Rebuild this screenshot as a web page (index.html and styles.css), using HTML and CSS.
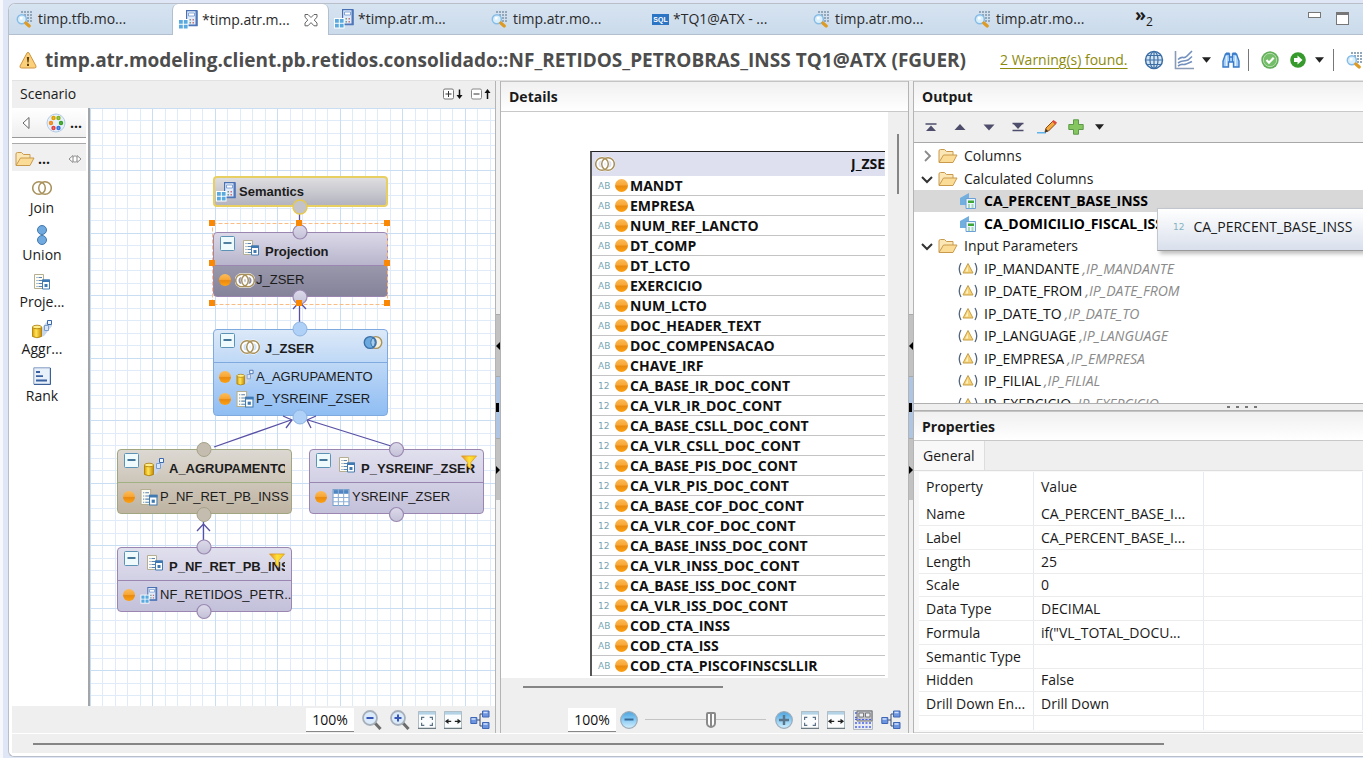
FILE: index.html
```html
<!DOCTYPE html>
<html lang="en">
<head>
<meta charset="utf-8">
<title>NF_RETIDOS_PETROBRAS_INSS</title>
<link rel="stylesheet" href="styles.css">
</head>
<body>
<svg class="sprite" aria-hidden="true">
  <defs>
    <linearGradient id="g-orange" x1="0" y1="0" x2="0" y2="1"><stop offset="0" stop-color="#fbbb58"/><stop offset=".45" stop-color="#f8a838"/><stop offset=".55" stop-color="#e98a10"/><stop offset="1" stop-color="#ffa210"/></linearGradient>
    <linearGradient id="g-gold" x1="0" y1="0" x2="1" y2="0"><stop offset="0" stop-color="#d99a00"/><stop offset=".4" stop-color="#ffe65a"/><stop offset="1" stop-color="#c98a00"/></linearGradient>
    <linearGradient id="g-blue" x1="0" y1="0" x2="0" y2="1"><stop offset="0" stop-color="#4ea3dc"/><stop offset=".4" stop-color="#7cc4f2"/><stop offset="1" stop-color="#d4effd"/></linearGradient>
    <linearGradient id="g-node" x1="0" y1="0" x2="0" y2="1"><stop offset="0" stop-color="#dcdaea"/><stop offset="1" stop-color="#c4c1d8"/></linearGradient>
    <linearGradient id="g-funnel" x1="0" y1="0" x2="1" y2="0"><stop offset="0" stop-color="#e88a2a"/><stop offset=".5" stop-color="#ffe23a"/><stop offset="1" stop-color="#f5c518"/></linearGradient>
  </defs>
  <symbol id="preview" viewBox="0 0 18 18"><path d="M5 1h2v2H5zM8 1h2v2H8zM11 1h2v2h-2zM14 1h2v2h-2zM8 4h2v2H8zM11 4h2v2h-2zM14 4h2v2h-2zM11 7h2v2h-2zM14 7h2v2h-2zM14 10h2v2h-2zM11 10h2v2h-2z" fill="#93a7bb"/><circle cx="5.800" cy="9.200" r="4.500" fill="#d9effc" stroke="#86bce6" stroke-width="1.500"/><path d="M4 7h2.500v2.500H4z" fill="#fff"/><path d="M9.800 13l3.400 3" stroke="#dd9a24" stroke-width="3.200" stroke-linecap="round"/></symbol>
  <symbol id="calcview" viewBox="0 0 20 20"><path d="M8.600.600H19v15H8.600z" fill="#e1ebf9" stroke="#4a70b4" stroke-width="1.200"/><path d="M17.500 1h2v15H10v-1.500h7.500z" fill="#4f76b9"/><path d="M10.500 3h6v3h-6z" fill="#fff" stroke="#6c92cc" stroke-width=".8"/><path d="M11.500 9H13v1.500h-1.500zM11.500 12H13v1.500h-1.500z" fill="#7a9a8a"/><path d="M14.500 9H16v1.500h-1.500zM14.500 12H16v1.500h-1.500z" fill="#c9707a"/><path d="M0 9h10.500v10.500H0z" fill="#fff"/><path d="M1 10h3.800v3.800H1zM5.800 10h3.800v3.800H5.800zM1 14.800h3.800v3.800H1zM5.800 14.800h3.800v3.800H5.800z" fill="#5aaadf"/></symbol>
  <symbol id="cross" viewBox="0 0 14 14"><path d="M1 1.500h3L7 4.500l3-3h3v2.800L10.200 7l2.800 3v2.800h-3L7 9.600l-3 3.200H1V10l2.800-3L1 4.300z" fill="#fff" stroke="#666"/></symbol>
  <symbol id="warn" viewBox="0 0 18 18"><path d="M8 2q1-1.500 2 0l7 13q.5 2-1.500 2h-13q-2 0-1.500-2z" fill="#fbd07a" stroke="#cf9440" stroke-linejoin="round"/><path d="M7.800 6h2.400l-.6 5.500H8.400zM8 12.800h2V15H8z" fill="#614012"/></symbol>
  <symbol id="globe" viewBox="0 0 20 20"><circle cx="10" cy="10" r="8.500" fill="#d4e6f6" stroke="#3d6fa5" stroke-width="1.500"/><ellipse cx="10" cy="10" rx="4" ry="8.500" fill="none" stroke="#3d6fa5" stroke-width="1.200"/><path d="M10 1.500v17M1.500 10h17M3 5.500h14M3 14.500h14" stroke="#3d6fa5" stroke-width="1.200"/></symbol>
  <symbol id="chart" viewBox="0 0 20 20"><path d="M1.500 1v17.500H20" fill="none" stroke="#8b9ab5" stroke-width="1.600"/><path d="M4 9.500q3-2.500 5-2t4-1.500l5-5M4 13q3-2 5-2t5-1l4-3.500M4 16q3-2 5-1.500t9-3" fill="none" stroke="#7390bd" stroke-width="1.600"/></symbol>
  <symbol id="binoc" viewBox="0 0 18 18"><path d="M3.500 3h4v3h3V3h4L17 10v6h-5.500v-5h-5v5H1v-6z" fill="#a5cef6" stroke="#3a7bc9" stroke-width="1.400"/><path d="M4 1.500h3.500v2H4zM10.500 1.500H14v2h-3.500z" fill="#3a7bc9"/><path d="M4.500 5v10M13.500 5v10" stroke="#e4f2fe" stroke-width="1.400"/><path d="M7.500 6v5M10.500 6v5" stroke="#3a7bc9"/></symbol>
  <symbol id="check" viewBox="0 0 18 18"><circle cx="9" cy="9" r="8.700" fill="#62ae58"/><circle cx="9" cy="9" r="6.700" fill="#74bd69" stroke="#b6deae"/><path d="M5.500 9l2.500 2.700 4.700-5" fill="none" stroke="#fff" stroke-width="2.200"/></symbol>
  <symbol id="go" viewBox="0 0 18 18"><circle cx="9" cy="9" r="7.800" fill="#379a2c"/><path d="M5 7h3.500V4.500L13.500 9l-5 4.500V11H5z" fill="#fff"/></symbol>
  <symbol id="caret" viewBox="0 0 10 6"><path d="M0 0h10L5 6z" fill="#222"/></symbol>
  <symbol id="expand" viewBox="0 0 20 12"><rect x=".5" y="1" width="10" height="10" rx="1.500" fill="#fff" stroke="#777"/><path d="M2.500 6h6M5.500 3v6" stroke="#333"/><path d="M16.500 1.500v7" stroke="#111" stroke-width="1.500"/><path d="M13.500 7h6l-3 4z" fill="#111"/></symbol>
  <symbol id="collapse" viewBox="0 0 20 12"><rect x=".5" y="1" width="10" height="10" rx="1.500" fill="#fff" stroke="#888"/><path d="M2.500 6h6" stroke="#333"/><path d="M16.500 3v8" stroke="#111" stroke-width="1.500"/><path d="M13.500 5h6l-3-4z" fill="#111"/></symbol>
  <symbol id="tri-left" viewBox="0 0 8 14"><path d="M7 1.500v11L1 7z" fill="#fff" stroke="#666"/></symbol>
  <symbol id="palette" viewBox="0 0 20 20"><circle cx="10" cy="10" r="9" fill="#e6f0fa" stroke="#b3cae4"/><g fill="#fff" stroke-width="1.800"><circle cx="7.500" cy="5" r="1.300" stroke="#e2a000"/><circle cx="12.500" cy="5" r="1.300" stroke="#84b51e"/><circle cx="5" cy="10" r="1.300" stroke="#f08a18"/><circle cx="15" cy="10" r="1.300" stroke="#35a022"/><circle cx="7.500" cy="15" r="1.300" stroke="#e04444"/><circle cx="12.500" cy="15" r="1.300" stroke="#3973de"/></g></symbol>
  <symbol id="folder" viewBox="0 0 20 16"><path d="M1 14V3q0-1.500 1.500-1.500h4L8.500 3.500H15V7" fill="#fbe7b6" stroke="#c99a4c"/><path d="M1 14.500L5.500 7H19l-4 7.500z" fill="#fbdc96" stroke="#c99a4c" stroke-linejoin="round"/></symbol>
  <symbol id="pin" viewBox="0 0 14 10"><path d="M5 1.500L1 5l4 3.500V6.500L7 8.500 9 6.500v2L13 5 9 1.500v2L7 1.500 5 3.500zM5 3.500v3M9 3.500v3" fill="#fff" stroke="#8a8a8a"/></symbol>
  <symbol id="join" viewBox="0 0 20 16"><g fill="none" stroke="#fff" stroke-width="4"><circle cx="7" cy="8" r="5.500"/><circle cx="13" cy="8" r="5.500"/></g><g fill="none" stroke="#a8915a" stroke-width="1.500"><circle cx="7" cy="8" r="6.300"/><circle cx="13" cy="8" r="6.300"/></g></symbol>
  <symbol id="join-left" viewBox="0 0 20 16"><circle cx="13" cy="8" r="6.300" fill="#f6f1df" stroke="#a8915a" stroke-width="1.500"/><circle cx="7" cy="8" r="6.300" fill="#6aaade" stroke="#3c70a8" stroke-width="1.500"/><path d="M10 3a6.500 6.500 0 0 0 0 10a6.500 6.500 0 0 0 0-10z" fill="#a7cdec" stroke="#3c70a8"/></symbol>
  <symbol id="union" viewBox="0 0 16 20"><g fill="#71aade" stroke="#4278ac"><circle cx="8" cy="5" r="4.500"/><circle cx="8" cy="15" r="4.500"/></g></symbol>
  <symbol id="proj" viewBox="0 0 16 16"><path d="M.5.500h9v14h-9z" fill="#fdfdf6" stroke="#b5af92"/><path d="M2.500 3.500h1M2.500 6.500h1M2.500 9.500h1M2.500 12.500h1M4.500 3.500H8M4.500 6.500H8M4.500 9.500H8M4.500 12.500H8" stroke="#5c84ae"/><path d="M8.500 6h7v9h-7z" fill="#fff" stroke="#457cb0"/><path d="M8 5.500h8V8H8z" fill="#3f79b2"/><path d="M10.500 10h3v3h-3z" fill="#3f79b2"/></symbol>
  <symbol id="aggr" viewBox="0 0 20 20"><path d="M9 10l4-5 3-4h4v6l-4 5-4 5-3 1z" fill="#c9d5e8"/><path d="M12.500 6.500h4v5h-4z" fill="#d9e6f7" stroke="#7c9cca"/><path d="M15.500 1.500h4v4h-4z" fill="#eef5fd" stroke="#3c68ae"/><path d="M.5 8v9.500q4.500 2.500 9 0V8z" fill="url(#g-gold)" stroke="#aa7800" stroke-width=".8"/><ellipse cx="5" cy="8" rx="4.500" ry="1.800" fill="#ffef8c" stroke="#aa7800" stroke-width=".8"/></symbol>
  <symbol id="rank" viewBox="0 0 18 18"><path d="M.8.800h16.400v16.400H.800z" fill="#e8f0fa" stroke="#7f9cc4"/><path d="M17.500 1v16.500H1" fill="none" stroke="#3d5f97"/><path d="M3 5h4M3 9.200h7M3 13.500h11" stroke="#3a62a2" stroke-width="1.800"/></symbol>
  <symbol id="ball" viewBox="0 0 12 12"><circle cx="6" cy="6" r="6" fill="url(#g-orange)"/></symbol>
  <symbol id="minus" viewBox="0 0 15 15"><rect x=".5" y=".5" width="14" height="14" rx="1" fill="#effafd" stroke="#5c93b5"/><path d="M3.500 7h8" stroke="#1a5780" stroke-width="1.600"/></symbol>
  <symbol id="funnel" viewBox="0 0 18 16"><path d="M1 1h16l-6 7v7L7.500 12V8z" fill="url(#g-funnel)" stroke="#d89a1e" stroke-width=".8"/></symbol>
  <symbol id="table" viewBox="0 0 16 16"><path d="M.5.500h15v15H.500z" fill="#fff" stroke="#7ba2cc"/><path d="M1 1h14v3.500H1z" fill="#4f86c2"/><path d="M5.500 0v16M10.500 0v16M0 8h16M0 12h16" stroke="#8fb0d6"/></symbol>
  <symbol id="lens-out" viewBox="0 0 20 20"><path d="M12.500 12.500l6 6.500" stroke="#6c6c6c" stroke-width="3"/><circle cx="8" cy="8" r="7" fill="#dcebfb" stroke="#a6b0ba" stroke-width="1.800"/><path d="M4.500 8h7" stroke="#3657b5" stroke-width="2"/></symbol>
  <symbol id="lens-in" viewBox="0 0 20 20"><path d="M12.500 12.500l6 6.500" stroke="#6c6c6c" stroke-width="3"/><circle cx="8" cy="8" r="7" fill="#dcebfb" stroke="#a6b0ba" stroke-width="1.800"/><path d="M4.500 8h7M8 4.500v7" stroke="#3657b5" stroke-width="2"/></symbol>
  <symbol id="fit" viewBox="0 0 20 20"><path d="M.5.500h19v19H.500z" fill="#fafcfd" stroke="#a3b1ba"/><path d="M1 1h18v3H1z" fill="#b3d2e6"/><path d="M0 19.300h20" stroke="#6e7a82" stroke-width="1.400"/><path d="M4 10V7h3M13 7h3v3M16 13v3h-3M7 16H4v-3" fill="none" stroke="#5d7186" stroke-width="1.300"/></symbol>
  <symbol id="fitw" viewBox="0 0 20 20"><path d="M.5.500h19v19H.500z" fill="#fafcfd" stroke="#a3b1ba"/><path d="M1 1h18v3H1z" fill="#b3d2e6"/><path d="M0 19.300h20" stroke="#6e7a82" stroke-width="1.400"/><path d="M3 11.500h5M12 11.500h5" stroke="#222" stroke-width="1.400"/><path d="M1 11.500l4-3v6zM19 11.500l-4-3v6z" fill="#222"/></symbol>
  <symbol id="layout" viewBox="0 0 20 20"><path d="M6 10h4M10 4v12M10 4h3M10 16h3" stroke="#3a4a6a" fill="none"/><g fill="#6d94de" stroke="#3e66b4"><path d="M.8 7.500h6v6h-6zM12.500 1H19v6h-6.500zM12.500 12.500H19v6h-6.500z"/></g><path d="M1.500 9h4M13.500 2.500h4M13.500 14h4" stroke="#cfdffb" stroke-width="1.600"/></symbol>
  <symbol id="less" viewBox="0 0 18 18"><circle cx="9" cy="9" r="8.300" fill="url(#g-blue)" stroke="#9aabb8" stroke-width="1.200"/><path d="M4.500 8.500h9" stroke="#386894" stroke-width="2"/></symbol>
  <symbol id="more" viewBox="0 0 18 18"><circle cx="9" cy="9" r="8.300" fill="url(#g-blue)" stroke="#9aabb8" stroke-width="1.200"/><path d="M4 9h10M9 4v10" stroke="#5c7488" stroke-width="2.400"/></symbol>
  <symbol id="overview" viewBox="0 0 20 20"><path d="M.5.500h19v19H.500z" fill="#e9ecf0" stroke="#b4bac2"/><path d="M2 3h3M2 7.500h17M2 13h17M2 17h17" stroke="#4a60ea" stroke-width="1.500" stroke-dasharray="2 1.500"/><path d="M4 1h15v10H4z" fill="#c2c6cc" stroke="#777"/><path d="M6 3h4.500v4H6zM12.500 3H17v4h-4.500z" fill="#eff1f4" stroke="#777"/><path d="M2 9.500h16" stroke="#4a60ea" stroke-width="1.200" stroke-dasharray="2 1.500"/></symbol>
  <symbol id="calccol" viewBox="0 0 16 16"><path d="M0 5l9-5v12H0z" fill="#72aede"/><path d="M6 5.500h9.500v10H6z" fill="#eaf5ff" stroke="#6ba0d6"/><path d="M8 7.500h6V10H8z" fill="#3fa535"/><path d="M8 12h2M11.500 12h2M8 14h2M11.500 14h2" stroke="#6cb870"/></symbol>
  <symbol id="param" viewBox="0 0 20 14"><path d="M3 1Q-.5 7 3 13M17 1q3.500 6 0 12" fill="none" stroke="#53657c" stroke-width="1.300"/><path d="M10 1.500l5 9.500H5z" fill="#f4d27c" stroke="#c99f42" stroke-linejoin="round"/><path d="M10 4.500v5H7.500z" fill="#fff3c4"/></symbol>
  <symbol id="a-top" viewBox="0 0 12 10"><path d="M.5 2h11" stroke="#4e4e6c" stroke-width="1.400"/><path d="M1 9h10L6 3.500z" fill="#4e4e6c"/></symbol>
  <symbol id="a-up" viewBox="0 0 12 10"><path d="M.5 8h11L6 2z" fill="#4e4e6c"/></symbol>
  <symbol id="a-down" viewBox="0 0 12 10"><path d="M.5 2.500h11L6 8.500z" fill="#4e4e6c"/></symbol>
  <symbol id="a-bottom" viewBox="0 0 12 10"><path d="M.5 8.500h11M.5 1.500h11" stroke="#4e4e6c" stroke-width="1.400"/><path d="M1 1.500h10L6 7z" fill="#4e4e6c"/></symbol>
  <symbol id="pencil" viewBox="0 0 20 14"><path d="M0 12.800h9" stroke="#5eb5ee" stroke-width="1.400"/><path d="M8 12l1-4 7-7 3 2.500-7.500 7.500z" fill="#f3a93c" stroke="#8a4a1c"/><path d="M15 1.500L16.500 0 20 2.500 18 4.500z" fill="#de4a3c"/><path d="M8 12.500l1-3.500 2 2z" fill="#333"/></symbol>
  <symbol id="plus" viewBox="0 0 16 16"><path d="M5.500.800h5v4.700h4.700v5h-4.700v4.700h-5v-4.700H.8v-5h4.700z" fill="#86c661" stroke="#5c9a48"/></symbol>
  <symbol id="chev-r" viewBox="0 0 12 12"><path d="M4 1l5 5-5 5" fill="none" stroke="#8a8a8a" stroke-width="1.800"/></symbol>
  <symbol id="chev-d" viewBox="0 0 12 12"><path d="M1 4l5 5 5-5" fill="none" stroke="#333" stroke-width="2"/></symbol>
</svg>

<div class="editor">
  <nav class="tabs">
    <button class="tab tab-first"><svg class="i18"><use href="#preview"/></svg>timp.tfb.mo...</button>
    <button class="tab tab-view active"><svg class="i20"><use href="#calcview"/></svg>*timp.atr.m...<svg class="close"><use href="#cross"/></svg></button>
    <button class="tab tab-view"><svg class="i20"><use href="#calcview"/></svg>*timp.atr.m...</button>
    <button class="tab"><svg class="i18"><use href="#preview"/></svg>timp.atr.mo...</button>
    <button class="tab"><span class="sql">SQL</span>*TQ1@ATX - ...</button>
    <button class="tab"><svg class="i18"><use href="#preview"/></svg>timp.atr.mo...</button>
    <button class="tab"><svg class="i18"><use href="#preview"/></svg>timp.atr.mo...</button>
    <button class="more-tabs">»<sub>2</sub></button>
    <button class="win-min" aria-label="Minimize"></button>
    <button class="win-max" aria-label="Maximize"></button>
  </nav>

  <header class="title">
    <svg class="i18"><use href="#warn"/></svg>
    <h1>timp.atr.modeling.client.pb.retidos.consolidado::NF_RETIDOS_PETROBRAS_INSS TQ1@ATX (FGUER)</h1>
    <a href="#" class="warning">2 Warning(s) found.</a>
    <div class="actions">
      <svg class="i20"><use href="#globe"/></svg>
      <svg class="i20"><use href="#chart"/></svg>
      <svg class="caret"><use href="#caret"/></svg>
      <svg class="i18"><use href="#binoc"/></svg>
      <i class="bar"></i>
      <svg class="i18"><use href="#check"/></svg>
      <svg class="i18"><use href="#go"/></svg>
      <svg class="caret"><use href="#caret"/></svg>
      <i class="bar"></i>
      <svg class="i18"><use href="#preview"/></svg>
    </div>
  </header>

  <main class="panes">
    <section class="scenario">
      <h2 class="plain-head"><span>Scenario</span><svg class="fold"><use href="#expand"/></svg><svg class="fold"><use href="#collapse"/></svg></h2>
      <div class="work">
        <aside class="palette">
          <div class="pal-head"><svg class="tri"><use href="#tri-left"/></svg><svg class="i20"><use href="#palette"/></svg><span>...</span></div>
          <div class="drawer"><svg class="folder"><use href="#folder"/></svg><span>...</span><svg class="pin"><use href="#pin"/></svg></div>
          <button class="tool"><svg class="wide"><use href="#join"/></svg>Join</button>
          <button class="tool"><svg class="i20"><use href="#union"/></svg>Union</button>
          <button class="tool"><svg class="i16"><use href="#proj"/></svg>Proje...</button>
          <button class="tool"><svg class="i20"><use href="#aggr"/></svg>Aggr...</button>
          <button class="tool"><svg class="i18"><use href="#rank"/></svg>Rank</button>
        </aside>
        <div class="canvas">
          <svg class="mesh" width="100%" height="100%">
            <defs><pattern id="mesh" width="125" height="125" patternUnits="userSpaceOnUse">
              <path d="M12.500 0v125M25.500 0v125M37.500 0v125M50.500 0v125M75.500 0v125M87.500 0v125M100.500 0v125M112.500 0v125M0 12.500h125M0 25.500h125M0 37.500h125M0 50.500h125M0 75.500h125M0 87.500h125M0 100.500h125M0 112.500h125" stroke="#dfebf8"/>
              <path d="M.5 0v125M62.500 0v125M0 .500h125M0 62.500h125" stroke="#c9def2"/>
            </pattern></defs>
            <rect width="100%" height="100%" fill="url(#mesh)"/>
          </svg>

          <div class="node semantics"><svg class="i20"><use href="#calcview"/></svg><b>Semantics</b></div>

          <div class="node projection">
            <div class="node-head"><svg class="i15"><use href="#minus"/></svg><svg class="kind"><use href="#proj"/></svg><b>Projection</b></div>
            <div class="node-row"><svg class="i12"><use href="#ball"/></svg><svg class="kind-wide"><use href="#join"/></svg>J_ZSER</div>
          </div>

          <div class="node join-node">
            <div class="node-head"><svg class="i15"><use href="#minus"/></svg><svg class="kind-wide"><use href="#join"/></svg><b>J_ZSER</b><svg class="badge"><use href="#join-left"/></svg></div>
            <div class="node-row"><svg class="i12"><use href="#ball"/></svg><svg class="kind-wide"><use href="#aggr"/></svg>A_AGRUPAMENTO</div>
            <div class="node-row"><svg class="i12"><use href="#ball"/></svg><svg class="kind-wide"><use href="#proj"/></svg>P_YSREINF_ZSER</div>
          </div>

          <div class="node aggr-node">
            <div class="node-head"><svg class="i15"><use href="#minus"/></svg><svg class="kind-wide"><use href="#aggr"/></svg><b>A_AGRUPAMENTO</b></div>
            <div class="node-row"><svg class="i12"><use href="#ball"/></svg><svg class="kind-wide"><use href="#proj"/></svg>P_NF_RET_PB_INSS</div>
          </div>

          <div class="node ys-node">
            <div class="node-head"><svg class="i15"><use href="#minus"/></svg><svg class="kind"><use href="#proj"/></svg><b>P_YSREINF_ZSER</b><svg class="badge"><use href="#funnel"/></svg></div>
            <div class="node-row"><svg class="i12"><use href="#ball"/></svg><svg class="kind-wide"><use href="#table"/></svg>YSREINF_ZSER</div>
          </div>

          <div class="node nf-node">
            <div class="node-head"><svg class="i15"><use href="#minus"/></svg><svg class="kind"><use href="#proj"/></svg><b>P_NF_RET_PB_INSS</b><svg class="badge"><use href="#funnel"/></svg></div>
            <div class="node-row"><svg class="i12"><use href="#ball"/></svg><svg class="kind-wide"><use href="#calcview"/></svg>NF_RETIDOS_PETR..</div>
          </div>

          <svg class="links" width="404" height="598">
            <g fill="none" stroke="#5750a4" stroke-width="1.300">
              <path d="M209.500 106v12M209.500 214v-23M203 201l6.500-7 6.500 7M124 339l77-27M193 308l9 4-6 8M301 338l-83-26M226 308l-9 4 4 8M113.500 432v-18M107 423l6.500-7 6.500 7"/>
            </g>
            <rect x="122.500" y="115.500" width="175" height="81" fill="none" stroke="#f8bc84" stroke-dasharray="4 2"/>
            <g stroke="#9a88b0" stroke-width="1.200" fill="url(#g-node)">
              <circle cx="210" cy="124" r="7"/><circle cx="210" cy="189" r="7"/>
              <circle cx="306.500" cy="341.500" r="7"/><circle cx="306.500" cy="406.500" r="7"/>
              <circle cx="114" cy="439" r="7"/><circle cx="114" cy="503.500" r="7"/>
            </g>
            <circle cx="210" cy="99" r="7" fill="#c3c3c9" stroke="#e6c94c" stroke-width="1.400"/>
            <g fill="#b0d1f7" stroke="#8db3e0"><circle cx="210" cy="221" r="7"/><circle cx="210" cy="309" r="7"/></g>
            <g fill="#c5bcb0" stroke="#a5a389"><circle cx="114" cy="341.500" r="7"/><circle cx="114" cy="406.500" r="7"/></g>
            <path d="M119 112h6v6h-6zM206 112h6v6h-6zM294 112h6v6h-6zM119 152h6v6h-6zM294 152h6v6h-6zM119 192h6v6h-6zM206 192h6v6h-6zM294 192h6v6h-6z" fill="#f98806"/>
          </svg>
        </div>
      </div>
      <div class="zoombar">
        <input class="zoom" value="100%" aria-label="Scenario zoom">
        <svg class="i20"><use href="#lens-out"/></svg><svg class="i20"><use href="#lens-in"/></svg><svg class="i18"><use href="#fit"/></svg><svg class="i18"><use href="#fitw"/></svg><svg class="i20"><use href="#layout"/></svg>
      </div>
    </section>

    <div class="sash"><div class="grips"><i class="to-left"></i><i class="middle"></i><i class="to-right"></i></div></div>

    <section class="details">
      <h2 class="pane-head">Details</h2>
      <div class="detail-body">
        <div class="detail-canvas">
          <table class="columns">
            <thead><tr><th><div><svg class="wide"><use href="#join"/></svg><span>J_ZSER</span></div></th></tr></thead>
            <tbody>
              <tr><td><i>AB</i><svg><use href="#ball"/></svg>MANDT</td></tr>
              <tr><td><i>AB</i><svg><use href="#ball"/></svg>EMPRESA</td></tr>
              <tr><td><i>AB</i><svg><use href="#ball"/></svg>NUM_REF_LANCTO</td></tr>
              <tr><td><i>AB</i><svg><use href="#ball"/></svg>DT_COMP</td></tr>
              <tr><td><i>AB</i><svg><use href="#ball"/></svg>DT_LCTO</td></tr>
              <tr><td><i>AB</i><svg><use href="#ball"/></svg>EXERCICIO</td></tr>
              <tr><td><i>AB</i><svg><use href="#ball"/></svg>NUM_LCTO</td></tr>
              <tr><td><i>AB</i><svg><use href="#ball"/></svg>DOC_HEADER_TEXT</td></tr>
              <tr><td><i>AB</i><svg><use href="#ball"/></svg>DOC_COMPENSACAO</td></tr>
              <tr><td><i>AB</i><svg><use href="#ball"/></svg>CHAVE_IRF</td></tr>
              <tr><td><i>12</i><svg><use href="#ball"/></svg>CA_BASE_IR_DOC_CONT</td></tr>
              <tr><td><i>12</i><svg><use href="#ball"/></svg>CA_VLR_IR_DOC_CONT</td></tr>
              <tr><td><i>12</i><svg><use href="#ball"/></svg>CA_BASE_CSLL_DOC_CONT</td></tr>
              <tr><td><i>12</i><svg><use href="#ball"/></svg>CA_VLR_CSLL_DOC_CONT</td></tr>
              <tr><td><i>12</i><svg><use href="#ball"/></svg>CA_BASE_PIS_DOC_CONT</td></tr>
              <tr><td><i>12</i><svg><use href="#ball"/></svg>CA_VLR_PIS_DOC_CONT</td></tr>
              <tr><td><i>12</i><svg><use href="#ball"/></svg>CA_BASE_COF_DOC_CONT</td></tr>
              <tr><td><i>12</i><svg><use href="#ball"/></svg>CA_VLR_COF_DOC_CONT</td></tr>
              <tr><td><i>12</i><svg><use href="#ball"/></svg>CA_BASE_INSS_DOC_CONT</td></tr>
              <tr><td><i>12</i><svg><use href="#ball"/></svg>CA_VLR_INSS_DOC_CONT</td></tr>
              <tr><td><i>12</i><svg><use href="#ball"/></svg>CA_BASE_ISS_DOC_CONT</td></tr>
              <tr><td><i>12</i><svg><use href="#ball"/></svg>CA_VLR_ISS_DOC_CONT</td></tr>
              <tr><td><i>AB</i><svg><use href="#ball"/></svg>COD_CTA_INSS</td></tr>
              <tr><td><i>AB</i><svg><use href="#ball"/></svg>COD_CTA_ISS</td></tr>
              <tr><td><i>AB</i><svg><use href="#ball"/></svg>COD_CTA_PISCOFINSCSLLIR</td></tr>
            </tbody>
          </table>
        </div>
        <div class="vscroll"><i></i></div>
      </div>
      <div class="hscroll"><i></i></div>
      <div class="zoombar detail-zoom">
        <input class="zoom" value="100%" aria-label="Details zoom">
        <svg class="i18"><use href="#less"/></svg>
        <input class="slider" type="range" min="0" max="100" value="55" aria-label="Zoom level">
        <svg class="i18"><use href="#more"/></svg><svg class="i18"><use href="#fit"/></svg><svg class="i18"><use href="#fitw"/></svg><svg class="i20"><use href="#overview"/></svg><svg class="i20"><use href="#layout"/></svg>
      </div>
    </section>

    <div class="sash"><div class="grips"><i class="to-left"></i><i class="middle"></i><i class="to-right"></i></div></div>

    <section class="output">
      <h2 class="pane-head">Output</h2>
      <div class="arrows">
        <svg class="arrow"><use href="#a-top"/></svg><svg class="arrow"><use href="#a-up"/></svg><svg class="arrow"><use href="#a-down"/></svg><svg class="arrow"><use href="#a-bottom"/></svg><svg class="pencil"><use href="#pencil"/></svg><svg class="i16"><use href="#plus"/></svg><svg class="caret"><use href="#caret"/></svg>
      </div>
      <div class="tree-wrap">
        <ul class="tree">
          <li><svg class="i12"><use href="#chev-r"/></svg><svg class="folder"><use href="#folder"/></svg>Columns</li>
          <li><svg class="i12"><use href="#chev-d"/></svg><svg class="folder"><use href="#folder"/></svg>Calculated Columns</li>
          <li class="leaf strong selected"><svg class="i16"><use href="#calccol"/></svg>CA_PERCENT_BASE_INSS</li>
          <li class="leaf strong"><svg class="i16"><use href="#calccol"/></svg>CA_DOMICILIO_FISCAL_ISS</li>
          <li><svg class="i12"><use href="#chev-d"/></svg><svg class="folder"><use href="#folder"/></svg>Input Parameters</li>
          <li class="leaf"><svg class="param"><use href="#param"/></svg>IP_MANDANTE<em>,IP_MANDANTE</em></li>
          <li class="leaf"><svg class="param"><use href="#param"/></svg>IP_DATE_FROM<em>,IP_DATE_FROM</em></li>
          <li class="leaf"><svg class="param"><use href="#param"/></svg>IP_DATE_TO<em>,IP_DATE_TO</em></li>
          <li class="leaf"><svg class="param"><use href="#param"/></svg>IP_LANGUAGE<em>,IP_LANGUAGE</em></li>
          <li class="leaf"><svg class="param"><use href="#param"/></svg>IP_EMPRESA<em>,IP_EMPRESA</em></li>
          <li class="leaf"><svg class="param"><use href="#param"/></svg>IP_FILIAL<em>,IP_FILIAL</em></li>
          <li class="leaf"><svg class="param"><use href="#param"/></svg>IP_EXERCICIO<em>,IP_EXERCICIO</em></li>
        </ul>
        <div class="tip" role="tooltip"><i>12</i>CA_PERCENT_BASE_INSS</div>
      </div>
      <div class="split"><i></i><i></i><i></i><i></i></div>
      <h2 class="pane-head short">Properties</h2>
      <div class="subtabs"><button>General</button></div>
      <div class="prop-box">
        <table class="props">
          <colgroup><col class="c-name"><col class="c-value"><col></colgroup>
          <thead><tr><th>Property</th><th>Value</th><th></th></tr></thead>
          <tbody>
            <tr><td>Name</td><td>CA_PERCENT_BASE_I...</td><td></td></tr>
            <tr><td>Label</td><td>CA_PERCENT_BASE_I...</td><td></td></tr>
            <tr><td>Length</td><td>25</td><td></td></tr>
            <tr><td>Scale</td><td>0</td><td></td></tr>
            <tr><td>Data Type</td><td>DECIMAL</td><td></td></tr>
            <tr><td>Formula</td><td>if("VL_TOTAL_DOCU...</td><td></td></tr>
            <tr><td>Semantic Type</td><td></td><td></td></tr>
            <tr><td>Hidden</td><td>False</td><td></td></tr>
            <tr><td>Drill Down En...</td><td>Drill Down</td><td></td></tr>
            <tr class="rest"><td></td><td></td><td></td></tr>
          </tbody>
        </table>
      </div>
    </section>
  </main>
  <footer class="page-scroll"><i></i></footer>
</div>
</body>
</html>
```
FILE: styles.css
```css
* { box-sizing: border-box; }
html, body { height: 100%; }
body {
  margin: 0;
  padding: 3px 0 1px 8px;
  background: linear-gradient(90deg, #f6f8fc 3px, #dfe6f5 3px);
  font: 14px/20px "Open Sans", "Noto Sans", sans-serif;
  color: #1a1a1a;
  overflow: hidden;
}
button { font: inherit; color: inherit; border: 0; background: none; padding: 0; margin: 0; }
h1, h2, ul { margin: 0; padding: 0; }
svg { display: block; flex: none; }
i { font-style: normal; }
.sprite { position: absolute; width: 0; height: 0; }

.i12 { width: 12px; height: 12px; }
.i15 { width: 15px; height: 15px; }
.i16 { width: 16px; height: 16px; }
.i18 { width: 18px; height: 18px; }
.i20 { width: 20px; height: 20px; }
.wide { width: 20px; height: 16px; }
.folder { width: 20px; height: 16px; }
.caret { width: 9px; height: 6px; }

.editor {
  height: 100%;
  display: flex;
  flex-direction: column;
  background: #fff;
  border: 1px solid #b9bfc9;
  border-right: 0;
  border-radius: 7px 0 0 6px;
  overflow: hidden;
}

/* editor tabs */
.tabs { display: flex; align-items: stretch; height: 31px; flex: none; background: linear-gradient(#d6e3f1, #cbdbeb); border-bottom: 1px solid #b3bfce; }
.tab { display: flex; align-items: center; gap: 4px; flex: 0 1 161px; min-width: 0; padding: 0 5px; white-space: nowrap; color: #2a2a2a; }
.tab-first { flex-basis: 163px; padding-left: 7px; }
.tab-view { flex-basis: 157px; }
.tab.active { background: #fff; border: 1px solid #b3bfce; border-width: 0 1px; border-radius: 6px 6px 0 0; margin-bottom: -1px; }
.close { width: 14px; height: 14px; margin-left: auto; margin-right: 5px; }
.sql { width: 17px; height: 11px; background: #2c74c4; color: #fff; font: bold 7px/11px "Liberation Sans", sans-serif; text-align: center; }
.more-tabs { margin-left: 5px; font-weight: 700; font-size: 18px; display: flex; align-items: flex-start; }
.more-tabs sub { font-size: 12px; font-weight: 400; margin-top: 8px; line-height: 20px; }
.win-min { width: 13px; height: 6px; border: 1px solid #777; background: #fff; margin: 8px 15px 0 auto; }
.win-max { width: 13px; height: 13px; border: 1px solid #777; border-top-width: 3px; background: #fff; margin: 8px 14px 0 0; }

/* title row */
.title { display: flex; align-items: center; height: 45px; flex: none; padding: 4px 0 0 10px; overflow: hidden; }
.title h1 { margin-left: 8px; font-size: 19px; line-height: 26px; font-weight: 700; color: #4d4d4d; white-space: nowrap; }
.warning { margin-left: 34px; color: #8d8a0b; white-space: nowrap; text-underline-offset: 3px; }
.actions { display: flex; align-items: center; gap: 10px; margin-left: 16px; }
.actions .caret { margin-left: -2px; margin-right: 1px; }
.bar { width: 1px; height: 22px; background: #777; margin: 0 2px 0 -2px; }

/* three panes */
.panes { flex: 1; min-height: 0; display: grid; grid-template-columns: minmax(0, 483fr) 6px minmax(0, 407fr) 6px minmax(0, 449fr); margin-left: 3px; background: #efefef; border-top: 1px solid #e2e2e2; }
.panes > section { display: flex; flex-direction: column; min-width: 0; min-height: 0; }

.plain-head { display: flex; align-items: center; gap: 8px; height: 27px; flex: none; padding: 0 4px 2px 8px; font-size: 14px; font-weight: 400; }
.plain-head span { margin-right: auto; }
.fold { width: 20px; height: 12px; }
.pane-head { height: 31px; flex: none; padding: 0 8px; font-size: 14px; line-height: 30px; font-weight: 700; border-top: 1px solid #c4c4c4; border-bottom: 1px solid #c8c8c8; background: linear-gradient(#f0f0f0, #fff); }
.short { height: 30px; }

.work { flex: 1; min-height: 0; display: flex; background: #fff; }
.palette { flex: 0 0 76px; background: #fff; padding-right: 2px; }
.pal-head { display: flex; align-items: center; height: 30px; padding-left: 10px; border-bottom: 1px solid #999; background: linear-gradient(#fff, #efefef); }
.tri { width: 8px; height: 14px; margin-right: 16px; }
.pal-head span { margin-left: 4px; font-weight: 700; }
.drawer { display: flex; align-items: center; gap: 3px; height: 28px; margin-top: 5px; padding: 3px 4px 0 3px; border-top: 1px solid #aaa; background: #f0f0f0; font-weight: 700; }
.pin { width: 14px; height: 10px; margin-left: auto; }
.tool { display: flex; flex-direction: column; align-items: center; width: 60px; height: 47px; padding-top: 7px; }
.tool svg { height: 20px; }

.canvas { flex: 1; position: relative; min-width: 0; border-left: 2px solid #a2a5aa; overflow: hidden; background: #fff; }
.mesh, .links { position: absolute; left: 0; top: 0; }

.node { position: absolute; width: 175px; border: 1px solid #9a86b0; border-radius: 4px; background: linear-gradient(#e1e0ee, #c3c0da); font: 13px/22px "Liberation Sans", Arial, sans-serif; color: #1c1c1c; }
.node-head { display: flex; height: 33px; padding: 3px 6px 0; border-bottom: 1px solid #9a86b0; }
.node-head b { width: 116px; margin-left: auto; padding-top: 5px; overflow: hidden; white-space: nowrap; }
.node-head .kind { width: 16px; height: 16px; margin: 4px 0 0 8px; }
.node-head .kind-wide { width: 20px; height: 20px; margin: 4px 0 0 5px; }
.node-row { display: flex; align-items: center; height: 22px; padding-left: 5px; white-space: nowrap; overflow: hidden; }
.node-head + .node-row { margin-top: 3px; }
.node-row:last-child { margin-bottom: 5px; }
.node-row .kind-wide { width: 20px; height: 17px; margin: 0 1px 0 4px; }
.badge { position: absolute; right: 4px; top: 5px; width: 20px; height: 15px; }
.semantics { left: 123px; top: 68px; height: 31px; display: flex; align-items: center; gap: 3px; padding-left: 1px; background: linear-gradient(#dedee0, #b4b4c0); border: 2px solid #e8cf62; }
.projection { left: 123px; top: 124px; background: linear-gradient(#dbd9e8, #b8b5cc 50%, #9a98ab 51%, #85839a); }
.join-node { left: 123px; top: 221px; background: linear-gradient(#dce9f8, #8fbdf3); border-color: #7faae0; }
.join-node .node-head { border-color: #7faae0; }
.aggr-node { left: 27px; top: 341px; background: linear-gradient(#dcd8d2, #bfb4a2); border-color: #a0a67f; }
.aggr-node .node-head { border-color: #a0b182; }
.ys-node { left: 219px; top: 341px; }
.nf-node { left: 27px; top: 439px; }

.zoombar { height: 27px; flex: none; display: flex; align-items: center; justify-content: flex-end; gap: 8px; padding: 0 5px; }
.zoom { width: 48px; height: 24px; border: 0; border-bottom: 1px solid #888; background: #fff; font: inherit; color: #111; text-align: center; padding: 0; }

/* sash between panes */
.sash { display: flex; flex-direction: column; justify-content: center; background: #f0f0f0; border: 1px solid #b4b4b4; border-width: 0 1px; }
.grips { display: flex; flex-direction: column; }
.grips i { height: 62px; background: #c2c2c2; border-top: 1px solid #aaa; display: flex; align-items: center; }
.grips .middle { background: #aec6e4; }
.grips i::before { content: ""; }
.to-left::before { border: 4px solid transparent; border-left: 0; border-right-color: #000; }
.to-right::before { border: 4px solid transparent; border-right: 0; border-left-color: #000; }
.middle::before { width: 3px; height: 9px; background: #000; }

/* details */
.detail-body { flex: 1; min-height: 0; display: flex; }
.detail-canvas { flex: 1; min-width: 0; padding: 39px 3px 0 89px; background: #fff; overflow: hidden; }
.columns { width: 100%; border-collapse: separate; border-spacing: 0; border: 1px solid #222; border-right: 0; border-bottom: 0; border-left: 2px solid #555; color: #111; }
.columns th { height: 24px; padding: 0; background: #dfe0ef; font-weight: 700; overflow: hidden; }
.columns th div { display: flex; align-items: center; justify-content: space-between; padding-left: 3px; overflow: hidden; }
.columns th span { width: 34px; white-space: nowrap; overflow: hidden; }
.columns td { display: flex; align-items: center; height: 20px; padding: 0 0 0 6px; line-height: 19px; font-weight: 700; border-bottom: 1px solid #c4c4c4; }
.columns td i { width: 17px; font: 9px/14px "DejaVu Sans", sans-serif; color: #78a4b2; }
.columns td svg { width: 13px; height: 13px; margin-right: 2px; }
.vscroll { width: 20px; display: flex; justify-content: center; padding-top: 22px; }
.vscroll i { width: 2px; height: 60px; background: #858585; }
.hscroll { height: 28px; flex: none; padding: 8px 0 0 22px; }
.hscroll i { display: block; width: 52%; height: 2px; background: #858585; }
.detail-zoom { gap: 8px; padding-right: 7px; }
.detail-zoom .zoom { margin-right: -4px; }
.slider { appearance: none; flex: 0 1 121px; min-width: 0; height: 18px; margin: 0 1px 0 -1px; background: linear-gradient(#c4c4c4, #c4c4c4) center / 100% 1px no-repeat; }
.slider::-webkit-slider-thumb { appearance: none; width: 10px; height: 16px; border: 2px solid #8a8a8a; border-radius: 2px 2px 5px 5px; background: linear-gradient(90deg, #fff 2px, #888 2px, #888 4px, #fff 4px); }

/* output */
.output { background: #efefef; }
.arrows { display: flex; align-items: center; gap: 17px; height: 31px; flex: none; padding-left: 11px; border-bottom: 1px solid #a8a8a8; }
.arrow { width: 12px; height: 10px; }
.pencil { width: 20px; height: 14px; margin: 0 -6px 0 -4px; }
.arrows .caret { margin-left: -6px; }
.tree-wrap { flex: 1; min-height: 0; position: relative; background: #fff; }
.tree { position: absolute; inset: 0; overflow: hidden; list-style: none; padding-top: 2px; }
.tree li { display: flex; align-items: center; height: 22px; padding-left: 7px; white-space: nowrap; }
.tree li:nth-child(even) { height: 23px; }
.tree .folder { margin: 0 6px 0 5px; }
.tree .leaf { padding-left: 44px; color: #111; }
.tree .i16 { margin: 0 8px 0 2px; }
.tree .strong { font-weight: 700; color: #000; }
.tree .selected { background: #d8d8d8; }
.tree em { margin-left: 3px; color: #8a8a8a; }
.param { width: 20px; height: 14px; margin-right: 6px; }
.tip { position: absolute; left: 243px; right: 0; top: 65px; height: 43px; padding: 0 0 5px 15px; display: flex; align-items: center; gap: 9px; white-space: nowrap; overflow: hidden; background: linear-gradient(#fff, #d9e0ec); border: 1px solid #c2c6ce; border-right: 0; box-shadow: 3px 3px 4px #8888; border-bottom-color: #999; }
.tip i { font: 9px/14px "DejaVu Sans", sans-serif; color: #84b4c0; }
.split { height: 8px; flex: none; display: flex; align-items: center; justify-content: center; gap: 6px; padding-left: 206px; border-top: 1px solid #b0b0b0; border-bottom: 1px solid #b0b0b0; }
.split i { width: 3px; height: 2px; background: #777; }
.subtabs { height: 30px; flex: none; display: flex; border-bottom: 1px solid #ddd; }
.subtabs button { padding: 0 9px; border-right: 1px solid #ddd; background: #f8f8f8; }
.prop-box { flex: none; padding: 1px 0 2px 5px; background: #f8f8f8; border-bottom: 1px solid #d4d4d4; }
.props { width: 100%; table-layout: fixed; border-collapse: separate; border-spacing: 0; background: #fff; }
.c-name { width: 115px; }
.c-value { width: 170px; }
.props th, .props td { padding: 0 0 0 7px; font-weight: 400; text-align: left; white-space: nowrap; overflow: hidden; border-right: 1px solid #e4ebf3; }
.props th { height: 30px; }
.props td { height: 24px; border-bottom: 1px solid #ececec; }
.props tr:nth-child(4n) td { height: 23px; }
.props .rest td { height: 14px; border-bottom: 0; }

.page-scroll { height: 23px; flex: none; margin-left: 3px; padding: 9px 0 0 21px; background: #efefef; border-top: 1px solid #fff; border-bottom: 3px solid #fff; }
.page-scroll i { display: block; width: 85%; height: 2px; background: #858585; }
```
